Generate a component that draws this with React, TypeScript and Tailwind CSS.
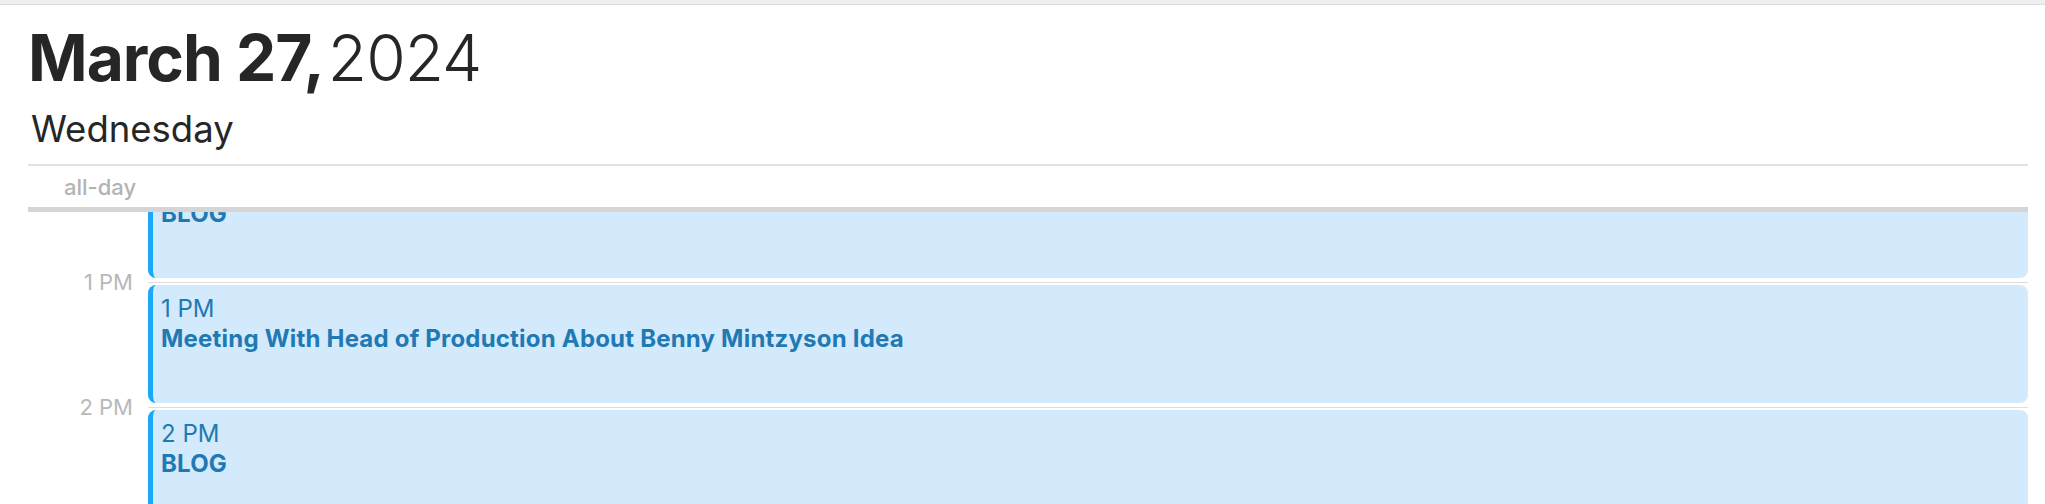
import React from 'react';

type CalEvent = { time: string; title: string };

const hours: { label: string; event: CalEvent }[] = [
  { label: '12 PM', event: { time: '12 PM', title: 'BLOG' } },
  { label: '1 PM', event: { time: '1 PM', title: 'Meeting With Head of Production About Benny Mintzyson Idea' } },
  { label: '2 PM', event: { time: '2 PM', title: 'BLOG' } },
];

const EventBlock: React.FC<{ event: CalEvent }> = ({ event }) => (
  <div className="mt-[2px] h-[118px] bg-[#d3e9fc] rounded-[8px] border-l-[5px] border-[#1ba8f6] pl-[8px] pt-[9px] text-[24px] leading-[30px] text-[#2179b3]">
    <div>{event.time}</div>
    <div className="font-bold tracking-[0.2px]">{event.title}</div>
  </div>
);

const App: React.FC = () => {
  return (
    <div className="w-full h-[504px] overflow-hidden bg-white flex flex-col font-['Inter',sans-serif] text-[#262626]">
      <div className="h-[5px] shrink-0 bg-[#efefef] border-b border-[#dddddd]"></div>

      <div className="flex-1 flex flex-col pl-[28px] pr-[17px] min-h-0">
        <h1 className="mt-[21px] text-[64px] leading-[64px] tracking-[-1px] whitespace-nowrap">
          <span className="font-bold">March 27,</span>
          <span className="font-light ml-[4px]">2024</span>
        </h1>
        <div className="mt-[21px] text-[36.5px] leading-[36px] pl-[3px]">Wednesday</div>

        <div className="mt-[17px] h-[2px] shrink-0 bg-[#e3e3e3]"></div>
        <div className="h-[41px] shrink-0 flex items-center pl-[36px] text-[22px] leading-[22px] font-medium text-[#b3b3b3]">
          all-day
        </div>
        <div className="h-[5px] shrink-0 bg-[#d5d5d5]"></div>

        {/* scrolled timeline */}
        <div className="flex-1 overflow-hidden min-h-0">
          <div className="-mt-[55px]">
            {hours.map(h => (
              <div key={h.label} className="flex h-[125px]">
                <div className="w-[120px] shrink-0 pr-[15px] text-right">
                  <div className="-mt-[11px] text-[22px] leading-[22px] text-[#b8b8b8]">{h.label}</div>
                </div>
                <div className="flex-1 border-t border-[#dedede]">
                  <EventBlock event={h.event} />
                </div>
              </div>
            ))}
          </div>
        </div>
      </div>
    </div>
  );
};

export default App;
